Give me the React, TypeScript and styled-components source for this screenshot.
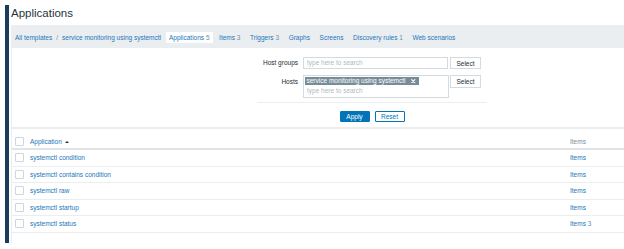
import React from "react";
import styled, { createGlobalStyle } from "styled-components";

const GlobalStyle = createGlobalStyle`
  html, body {
    margin: 0;
    padding: 0;
    background: #ffffff;
  }
  body {
    font-family: "Liberation Sans", Arial, sans-serif;
    font-size: 6.5px;
    color: #1f2c33;
  }
  * {
    box-sizing: border-box;
  }
`;

const Page = styled.div`
  display: flex;
  height: 249px;
  overflow: hidden;
  padding: 5px 0 6px 5px;
`;

const Sidebar = styled.div`
  width: 3.5px;
  background: #1a3b5c;
`;

const Main = styled.div`
  flex: 1;
  margin-left: 2.5px;
  display: flex;
  flex-direction: column;
`;

const Header = styled.div`
  height: 20px;
  padding-top: 1px;
`;

const Title = styled.h1`
  margin: 0;
  font-size: 11.5px;
  line-height: 14px;
  font-weight: normal;
  color: #26343b;
`;

const Body = styled.div`
  flex: 1;
  background: #ebeef0;
  display: flex;
  flex-direction: column;
  padding-left: 1px;
`;

const Nav = styled.div`
  height: 23px;
  display: flex;
  align-items: center;
  padding: 1px 0 0 3px;
  white-space: nowrap;
`;

const Link = styled.a`
  color: #2176bb;
  text-decoration: none;
  cursor: pointer;
`;

const Crumbs = styled.div`
  display: flex;
  align-items: center;
  margin-right: 5px;
`;

const CrumbSep = styled.span`
  color: #768d99;
  margin: 0 4px;
`;

const Tab = styled.div<{ $active?: boolean }>`
  height: 11px;
  line-height: 11px;
  padding: 0 3px;
  margin-right: 3.6px;
  background: ${(p) => (p.$active ? "#ffffff" : "transparent")};
`;

const Count = styled.span`
  color: #768d99;
  margin-left: 1.8px;
`;

const FilterPanel = styled.div`
  height: 79px;
  background: #ffffff;
  padding: 9px 0 0 245px;
`;

const FilterForm = styled.div`
  width: 230px;
`;

const FormRow = styled.div<{ $gap?: number }>`
  display: flex;
  align-items: flex-start;
  margin-bottom: ${(p) => p.$gap ?? 0}px;
`;

const Label = styled.label<{ $lineHeight: number }>`
  width: 41px;
  margin-right: 5px;
  text-align: right;
  line-height: ${(p) => p.$lineHeight}px;
  color: #1f2c33;
`;

const TextInput = styled.div`
  width: 145px;
  height: 12px;
  border: 1px solid #d3dbdf;
  padding-left: 3px;
  line-height: 10px;
  color: #acbbc2;
`;

const MultiSelect = styled.div`
  width: 146px;
  height: 23px;
  border: 1px solid #d3dbdf;
  padding: 1px 1px 0 1px;
  display: flex;
  flex-direction: column;
  align-items: flex-start;
`;

const Chip = styled.span`
  display: inline-flex;
  align-items: center;
  height: 8px;
  line-height: 8px;
  padding: 0 3px 0 1.5px;
  background: #768d99;
  color: #ffffff;
`;

const ChipRemove = styled.svg`
  margin-left: 6px;
  width: 4.5px;
  height: 4.5px;
`;

const Placeholder = styled.span`
  margin-top: 1px;
  padding-left: 2px;
  line-height: 10px;
  color: #acbbc2;
`;

const SelectButton = styled.button<{ $h?: number; $offset?: number }>`
  width: 31px;
  height: ${(p) => p.$h ?? 12}px;
  margin-left: ${(p) => p.$offset ?? 2}px;
  padding: 0;
  border: 1px solid #d3dbdf;
  background: #ffffff;
  font-family: inherit;
  font-size: 6.5px;
  color: #1f2c33;
`;

const Separator = styled.div`
  margin-top: 4px;
  height: 1px;
  background: #ebeef0;
`;

const Actions = styled.div`
  margin-top: 7.5px;
  display: flex;
  justify-content: center;
  gap: 5px;
`;

const ActionButton = styled.button<{ $primary?: boolean }>`
  width: 30px;
  height: 11.5px;
  padding: 0;
  border: 1px solid #0275b8;
  border-radius: 1px;
  background: ${(p) => (p.$primary ? "#0275b8" : "#ffffff")};
  color: ${(p) => (p.$primary ? "#ffffff" : "#0275b8")};
  font-family: inherit;
  font-size: 6.5px;
`;

const Table = styled.div`
  flex: 1;
  margin-top: 2px;
  background: #ffffff;
`;

const HeadRow = styled.div`
  display: flex;
  align-items: center;
  height: 21px;
  padding: 6px 0 0 3px;
  border-bottom: 2px solid #dfe4e7;
`;

const Row = styled.div`
  display: flex;
  align-items: center;
  height: 16.5px;
  padding-left: 3px;
  border-bottom: 1px solid #ebeef0;
`;

const Checkbox = styled.span`
  width: 9px;
  height: 9px;
  border: 1px solid #cdd6db;
  border-radius: 1px;
  background: #ffffff;
  margin-right: 6px;
`;

const NameCell = styled.div`
  flex: 1;
  display: flex;
  align-items: center;
`;

const ItemsCell = styled.div<{ $muted?: boolean }>`
  width: 54px;
  color: ${(p) => (p.$muted ? "#768d99" : "inherit")};
`;

const SortArrow = styled.span`
  display: inline-block;
  margin-left: 3px;
  width: 0;
  height: 0;
  border-left: 2px solid transparent;
  border-right: 2px solid transparent;
  border-bottom: 2.5px solid #1f2c33;
`;

const tabs = [
  { label: "Applications", count: "5", active: true },
  { label: "Items", count: "3" },
  { label: "Triggers", count: "3" },
  { label: "Graphs" },
  { label: "Screens" },
  { label: "Discovery rules", count: "1" },
  { label: "Web scenarios" },
];

const applications = [
  { name: "systemctl condition", items: "" },
  { name: "systemctl contains condition", items: "" },
  { name: "systemctl raw", items: "" },
  { name: "systemctl startup", items: "" },
  { name: "systemctl status", items: "3" },
];

const App: React.FC = () => {
  return (
    <>
      <GlobalStyle />
      <Page>
        <Sidebar />
        <Main>
          <Header>
            <Title>Applications</Title>
          </Header>
          <Body>
            <Nav>
              <Crumbs>
                <Link>All templates</Link>
                <CrumbSep>/</CrumbSep>
                <Link>service monitoring using systemctl</Link>
              </Crumbs>
              {tabs.map((t) => (
                <Tab key={t.label} $active={t.active}>
                  <Link>{t.label}</Link>
                  {t.count && <Count>{t.count}</Count>}
                </Tab>
              ))}
            </Nav>

            <FilterPanel>
              <FilterForm>
                <FormRow $gap={6}>
                  <Label $lineHeight={12}>Host groups</Label>
                  <TextInput>type here to search</TextInput>
                  <SelectButton>Select</SelectButton>
                </FormRow>
                <FormRow>
                  <Label $lineHeight={13}>Hosts</Label>
                  <MultiSelect>
                    <Chip>
                      service monitoring using systemctl
                      <ChipRemove viewBox="0 0 10 10">
                        <path
                          d="M1.5 1.5 L8.5 8.5 M8.5 1.5 L1.5 8.5"
                          stroke="#ffffff"
                          strokeWidth="2.6"
                          strokeLinecap="round"
                        />
                      </ChipRemove>
                    </Chip>
                    <Placeholder>type here to search</Placeholder>
                  </MultiSelect>
                  <SelectButton $h={13} $offset={1}>
                    Select
                  </SelectButton>
                </FormRow>
                <Separator />
                <Actions>
                  <ActionButton $primary>Apply</ActionButton>
                  <ActionButton>Reset</ActionButton>
                </Actions>
              </FilterForm>
            </FilterPanel>

            <Table>
              <HeadRow>
                <NameCell>
                  <Checkbox />
                  <Link>Application</Link>
                  <SortArrow />
                </NameCell>
                <ItemsCell $muted>Items</ItemsCell>
              </HeadRow>
              {applications.map((a) => (
                <Row key={a.name}>
                  <NameCell>
                    <Checkbox />
                    <Link>{a.name}</Link>
                  </NameCell>
                  <ItemsCell>
                    <Link>Items</Link>
                    {a.items && <Count>{a.items}</Count>}
                  </ItemsCell>
                </Row>
              ))}
            </Table>
          </Body>
        </Main>
      </Page>
    </>
  );
};

export default App;
